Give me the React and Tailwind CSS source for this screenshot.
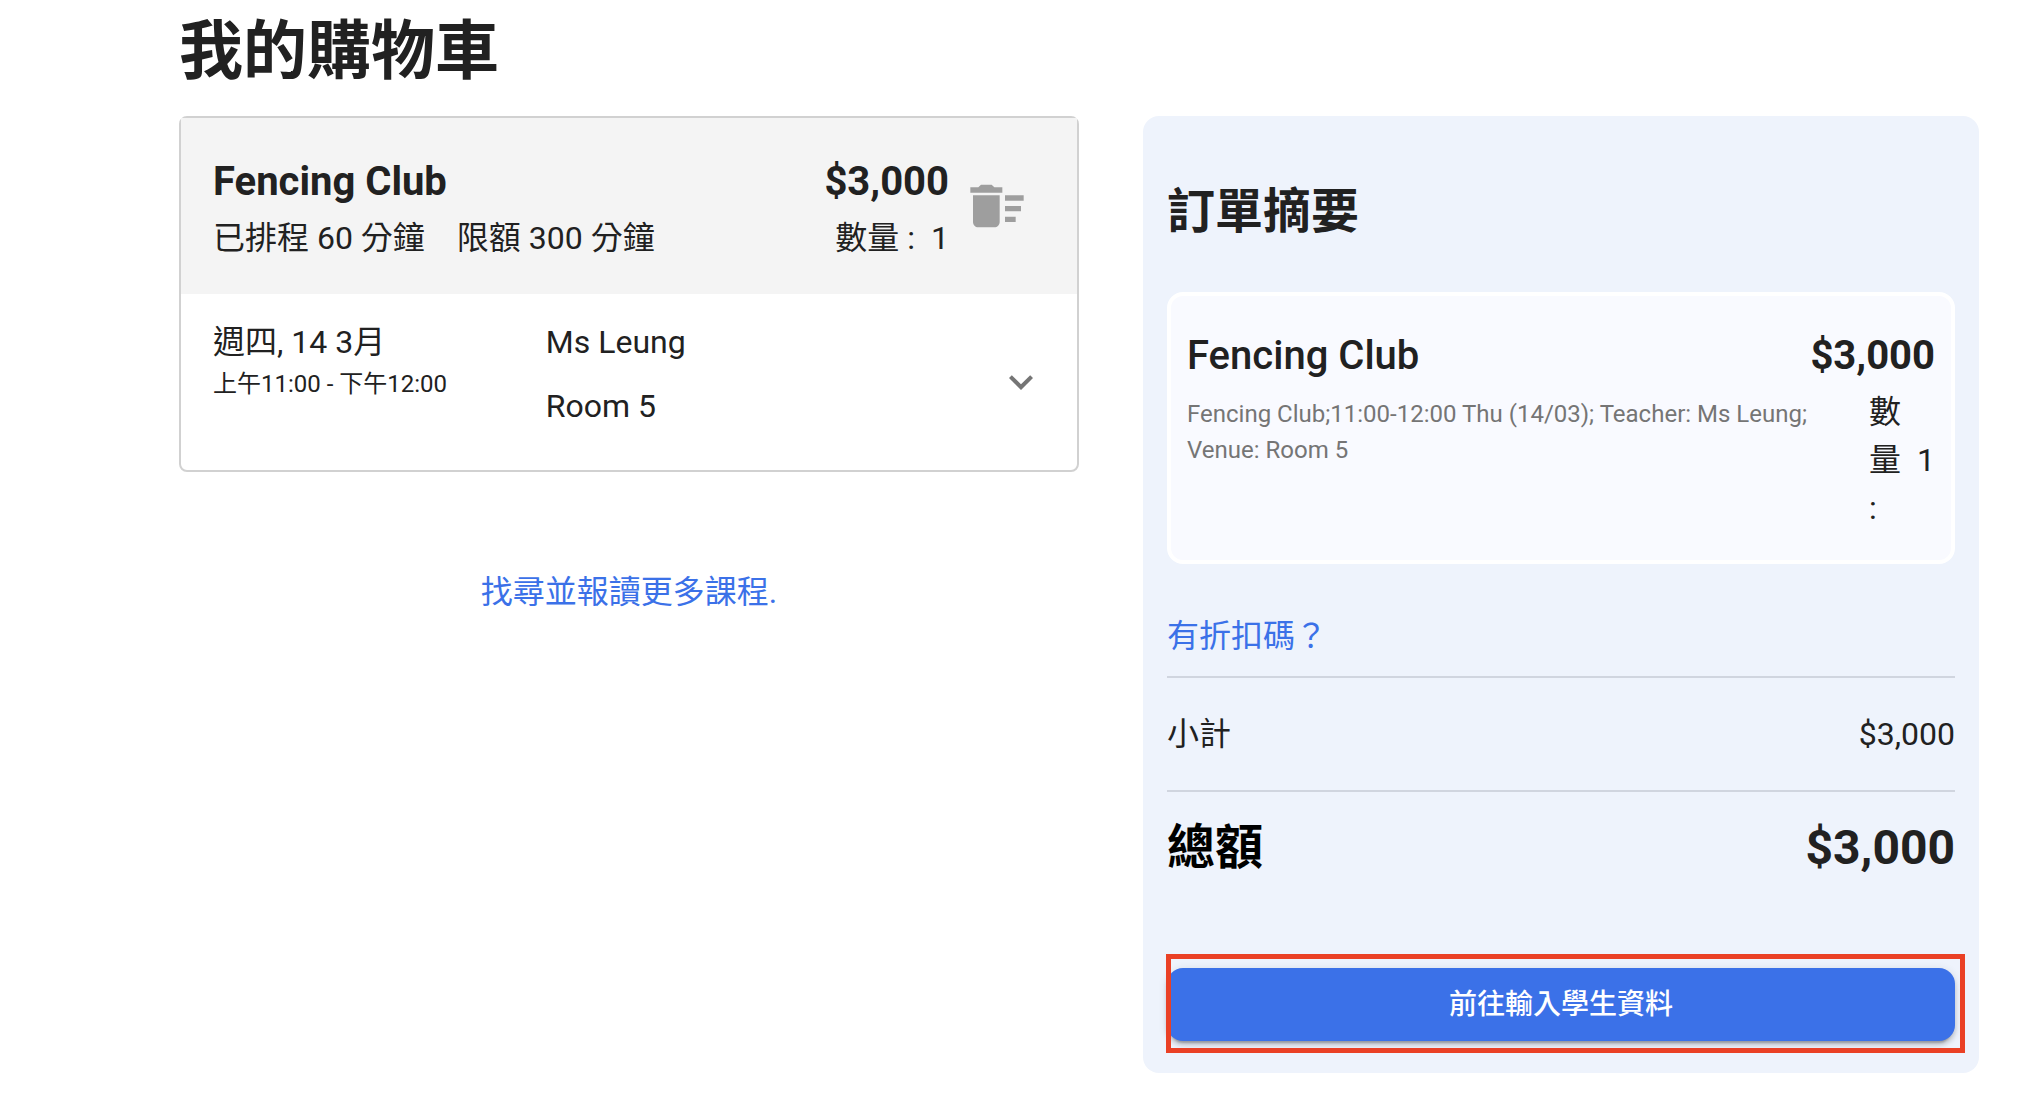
const cartItem = {
  name: "Fencing Club",
  price: "$3,000",
  quantity: 1,
  scheduled: "已排程 60 分鐘",
  limit: "限額 300 分鐘",
  date: "週四, 14 3月",
  time: "上午11:00 - 下午12:00",
  teacher: "Ms Leung",
  room: "Room 5",
  detail: "Fencing Club;11:00-12:00 Thu (14/03); Teacher: Ms Leung; Venue: Room 5",
};

function DeleteSweepIcon() {
  return (
    <svg viewBox="0 0 24 24" className="size-16 fill-[#9e9e9e]" aria-hidden="true">
      <path d="M15 16h4v2h-4zm0-8h7v2h-7zm0 4h6v2h-6zM3 18c0 1.1.9 2 2 2h6c1.1 0 2-.9 2-2V8H3v10zM14 5h-3l-1-1H6L5 5H2v2h12z" />
    </svg>
  );
}

function ExpandMoreIcon() {
  return (
    <svg viewBox="0 0 24 24" className="size-12 fill-[#757575]" aria-hidden="true">
      <path d="M16.59 8.59 12 13.17 7.41 8.59 6 10l6 6 6-6z" />
    </svg>
  );
}

function CartCard({ item }) {
  return (
    <article className="rounded-lg border-2 border-[#d1d1d1]">
      <header className="flex items-center bg-[#f4f4f4] p-8">
        <div className="min-w-0 flex-1">
          <h2 className="text-[40px] leading-[64px] font-bold">{item.name}</h2>
          <p className="flex gap-8 leading-[48px]">
            <span>{item.scheduled}</span>
            <span>{item.limit}</span>
          </p>
        </div>
        <div className="flex flex-col items-end">
          <p className="text-[40px] leading-[64px] font-bold">{item.price}</p>
          <p className="flex gap-4 leading-[48px]">
            <span>數量 :</span>
            <span>{item.quantity}</span>
          </p>
        </div>
        <button type="button" aria-label="刪除" className="px-4">
          <DeleteSweepIcon />
        </button>
      </header>
      <div className="flex items-center px-8 pt-4 pb-8">
        <div className="w-2/5 self-start pt-2">
          <p className="leading-[48px]">{item.date}</p>
          <p className="text-2xl leading-9">{item.time}</p>
        </div>
        <div className="flex-1 leading-[64px]">
          <p>{item.teacher}</p>
          <p>{item.room}</p>
        </div>
        <button type="button" aria-label="展開" className="mt-4">
          <ExpandMoreIcon />
        </button>
      </div>
    </article>
  );
}

function OrderSummary({ item }) {
  return (
    <aside className="rounded-2xl bg-[#eef3fc] px-6 pb-8">
      <h2 className="pt-16 pb-12 text-5xl leading-[64px] font-bold">訂單摘要</h2>

      <section className="rounded-2xl border-4 border-white bg-[#f9faff] px-4 pt-7 pb-7">
        <div className="flex justify-between text-[40px] leading-[64px]">
          <h3 className="font-medium">{item.name}</h3>
          <p className="font-bold">{item.price}</p>
        </div>
        <div className="flex">
          <p className="flex-1 pt-2 pr-10 text-2xl leading-9 text-[#757575]">{item.detail}</p>
          <p className="flex items-center gap-4 leading-[48px]">
            <span className="w-8">數量 :</span>
            <span>{item.quantity}</span>
          </p>
        </div>
      </section>

      <div className="border-b-2 border-[#d0d5df] pt-12 pb-4">
        <a href="#discount" className="block leading-[48px] text-[#3b71e8]">有折扣碼？</a>
      </div>

      <dl>
        <div className="flex items-center justify-between border-b-2 border-[#d0d5df] py-8 leading-[48px]">
          <dt>小計</dt>
          <dd>{item.price}</dd>
        </div>
        <div className="flex items-center justify-between pt-6 pb-[88px] text-5xl leading-[64px] font-bold">
          <dt className="text-black">總額</dt>
          <dd>{item.price}</dd>
        </div>
      </dl>

      <div className="relative">
        <button
          type="button"
          className="block h-[73px] w-full rounded-2xl bg-[#3b71e8] text-[28px] leading-[48px] font-medium text-white shadow-[0_6px_2px_-4px_rgba(0,0,0,0.2),0_4px_4px_rgba(0,0,0,0.14),0_2px_10px_rgba(0,0,0,0.12)]"
        >
          前往輸入學生資料
        </button>
        <div className="pointer-events-none absolute -top-[14px] -right-[10px] -bottom-[12px] -left-px border-[5px] border-[#ea4025]" />
      </div>
    </aside>
  );
}

export default function App() {
  return (
    <main
      lang="zh-Hant"
      className="bg-white pt-3 pr-[45px] pb-6 pl-[179px] font-['Roboto','Noto_Sans_CJK_TC',sans-serif] text-[32px] text-[#212121]"
    >
      <h1 className="mb-6 text-[64px] leading-[80px] font-bold">我的購物車</h1>
      <div className="grid grid-cols-[900fr_836fr] items-start gap-16">
        <div>
          <CartCard item={cartItem} />
          <p className="mt-24 text-center leading-[48px]">
            <a href="#courses" className="text-[#3b71e8]">找尋並報讀更多課程.</a>
          </p>
        </div>
        <OrderSummary item={cartItem} />
      </div>
    </main>
  );
}
